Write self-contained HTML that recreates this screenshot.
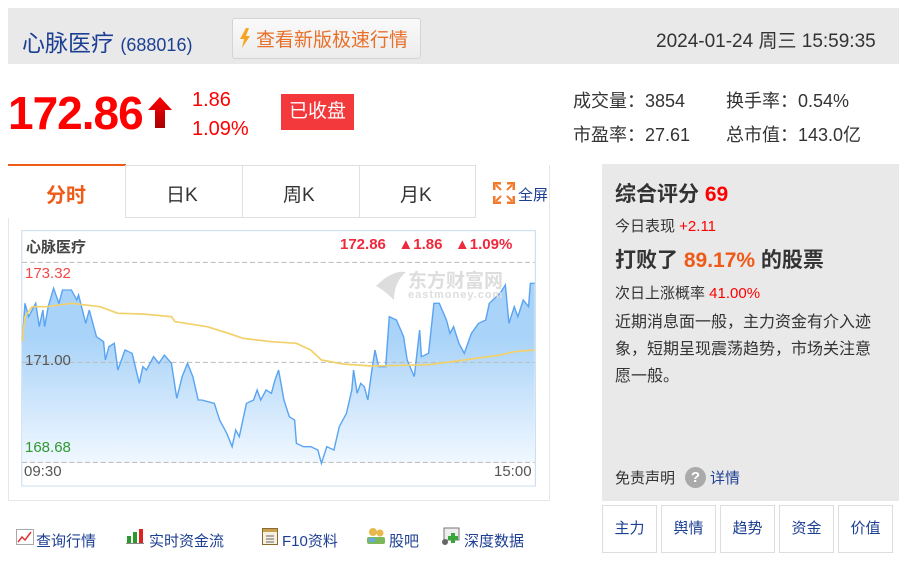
<!DOCTYPE html>
<html><head><meta charset="utf-8"><style>
*{margin:0;padding:0;box-sizing:border-box}
body{width:906px;height:567px;background:#fff;position:relative;overflow:hidden;font-family:"Liberation Sans","Noto Sans CJK SC",sans-serif;color:#333}
.a{position:absolute;white-space:nowrap}
.blue{color:#1d3f93}
.red{color:#f00}
</style></head><body>
<div class="a" style="left:8px;top:8px;width:891px;height:56px;background:#e9e9e9"></div>
<div class="a blue" style="left:22px;top:24px;font-size:23px">心脉医疗 <span style="font-size:18px">(688016)</span></div>
<div class="a" style="left:232px;top:18px;width:189px;height:41px;border:1px solid #d4d4d4;border-radius:3px;background:linear-gradient(#fafafa,#ececec)"></div>
<svg class="a" style="left:239px;top:28px" width="12" height="20" viewBox="0 0 12 20"><path d="M7 0L1 11h4l-2 9 8-12H7l3-8z" fill="#f5a623"/></svg>
<div class="a" style="left:256px;top:25px;font-size:19px;color:#e8702a">查看新版极速行情</div>
<div class="a" style="left:656px;top:26px;font-size:19px;color:#333">2024-01-24 周三 15:59:35</div>

<div class="a red" style="left:8px;top:86px;font-size:46px;font-weight:bold;letter-spacing:-1px">172.86</div>
<svg class="a" style="left:147px;top:97px" width="26" height="32" viewBox="0 0 26 32"><defs><linearGradient id="ar" x1="0" y1="0" x2="0" y2="1"><stop offset="0" stop-color="#f00"/><stop offset="1" stop-color="#a00"/></linearGradient></defs><path d="M13 0L25 13H18V31H8V13H1z" fill="url(#ar)"/></svg>
<div class="a red" style="left:192px;top:86px;font-size:20px;line-height:29px">1.86<br>1.09%</div>
<div class="a" style="left:281px;top:94px;width:73px;height:36px;background:#f3393b;color:#fff;font-size:19px;line-height:36px;text-align:center">已收盘</div>

<div class="a" style="left:573px;top:84px;font-size:18px;line-height:34px">成交量：3854<br>市盈率：27.61</div>
<div class="a" style="left:726px;top:84px;font-size:18px;line-height:34px">换手率：0.54%<br>总市值：143.0亿</div>

<!-- left panel -->
<div class="a" style="left:8px;top:165px;width:542px;height:336px;border:1px solid #e6e6e6;border-top:none"></div>
<div class="a" style="left:8px;top:164px;width:118px;height:54px;border-top:2px solid #ee5b19;background:#fff"></div>
<div class="a" style="left:125px;top:165px;width:351px;height:53px;border:1px solid #e0e0e0;background:#fff"></div>
<div class="a" style="left:242px;top:165px;width:1px;height:53px;background:#e0e0e0"></div>
<div class="a" style="left:359px;top:165px;width:1px;height:53px;background:#e0e0e0"></div>
<div class="a" style="left:46px;top:179px;font-size:20px;font-weight:bold;color:#ee5b19">分时</div>
<div class="a" style="left:166px;top:180px;font-size:19px">日K</div>
<div class="a" style="left:283px;top:180px;font-size:19px">周K</div>
<div class="a" style="left:400px;top:180px;font-size:19px">月K</div>
<svg class="a" style="left:493px;top:182px" width="22" height="22" viewBox="0 0 22 22" fill="none" stroke="#f27a2a" stroke-width="3"><path d="M1 8V1h7M14 1h7v7M21 14v7h-7M8 21H1v-7"/><path d="M3 3l5 5M19 3l-5 5M19 19l-5-5M3 19l5-5" stroke-width="2"/></svg>
<div class="a blue" style="left:518px;top:184px;font-size:15px">全屏</div>

<svg class="a" style="left:0;top:160px" width="600" height="330" viewBox="0 0 1680 990" preserveAspectRatio="none">
<defs><linearGradient id="g" x1="0" y1="0" x2="0" y2="1"><stop offset="0.3" stop-color="#a9d3f8"/><stop offset="1" stop-color="#f1f8ff"/></linearGradient></defs>
<rect x="61" y="212" width="1438" height="766" fill="none" stroke="#c8dcef" stroke-width="3"/>
<path d="M62 545L70 430L80 470L100 430L110 500L120 450L125 500L135 440L150 385L165 430L175 390L200 390L215 420L220 405L240 490L250 450L270 530L290 545L295 600L305 560L320 550L330 630L350 570L370 580L390 670L400 620L410 630L430 590L445 610L460 585L480 610L495 715L510 650L525 610L540 650L555 720L565 720L600 730L615 780L635 820L650 860L660 810L670 830L690 730L710 720L720 690L730 720L745 690L760 700L770 660L780 630L795 720L810 770L825 780L830 850L850 860L870 860L890 870L900 910L915 860L935 870L950 800L970 760L985 690L990 630L1000 700L1010 670L1020 680L1030 720L1040 640L1050 570L1060 620L1080 620L1090 470L1110 480L1130 530L1140 600L1160 650L1175 510L1180 590L1200 580L1215 430L1230 430L1250 480L1260 520L1270 500L1285 550L1300 580L1320 520L1340 490L1360 480L1370 430L1380 420L1400 400L1415 375L1425 490L1440 440L1450 470L1465 420L1480 440L1485 370L1497 370L1497 908L62 908Z" fill="url(#g)"/>
<g stroke="#bbb" stroke-width="3" stroke-dasharray="14 8"><line x1="62" y1="307" x2="1497" y2="307"/><line x1="62" y1="607" x2="1497" y2="607"/><line x1="62" y1="907" x2="1497" y2="907"/></g>
<path d="M62 545L70 430L80 470L100 430L110 500L120 450L125 500L135 440L150 385L165 430L175 390L200 390L215 420L220 405L240 490L250 450L270 530L290 545L295 600L305 560L320 550L330 630L350 570L370 580L390 670L400 620L410 630L430 590L445 610L460 585L480 610L495 715L510 650L525 610L540 650L555 720L565 720L600 730L615 780L635 820L650 860L660 810L670 830L690 730L710 720L720 690L730 720L745 690L760 700L770 660L780 630L795 720L810 770L825 780L830 850L850 860L870 860L890 870L900 910L915 860L935 870L950 800L970 760L985 690L990 630L1000 700L1010 670L1020 680L1030 720L1040 640L1050 570L1060 620L1080 620L1090 470L1110 480L1130 530L1140 600L1160 650L1175 510L1180 590L1200 580L1215 430L1230 430L1250 480L1260 520L1270 500L1285 550L1300 580L1320 520L1340 490L1360 480L1370 430L1380 420L1400 400L1415 375L1425 490L1440 440L1450 470L1465 420L1480 440L1485 370L1497 370" fill="none" stroke="#5aa4f2" stroke-width="4"/>
<path d="M62 545L70 470L90 440L130 440L200 430L280 440L330 460L400 462L480 470L490 485L580 500L640 520L680 535L760 545L830 550L870 570L900 600L960 612L1040 618L1200 614L1300 600L1400 585L1440 575L1497 570" fill="none" stroke="#f2d16b" stroke-width="5"/>
</svg>
<svg class="a" style="left:374px;top:270px" width="34" height="32" viewBox="0 0 34 32"><path d="M2 16Q18 0 32 2Q20 12 20 30Q10 20 2 16Z" fill="#ddd"/></svg>
<div class="a" style="left:408px;top:266px;font-size:19px;font-weight:bold;color:#ddd">东方财富网</div>
<div class="a" style="left:408px;top:289px;font-size:11px;font-weight:bold;color:#ddd;letter-spacing:1px">eastmoney.com</div>
<div class="a" style="left:26px;top:236px;font-size:15px;font-weight:bold;color:#444">心脉医疗</div>
<div class="a" style="left:340px;top:236px;font-size:15px;font-weight:bold;color:#f0283c">172.86 &nbsp; ▲1.86 &nbsp; ▲1.09%</div>
<div class="a" style="left:25px;top:265px;font-size:15px;color:#f04848">173.32</div>
<div class="a" style="left:25px;top:352px;font-size:15px;color:#555">171.00</div>
<div class="a" style="left:25px;top:439px;font-size:15px;color:#2e9a2e">168.68</div>
<div class="a" style="left:24px;top:463px;font-size:15px;color:#555">09:30</div>
<div class="a" style="left:494px;top:463px;font-size:15px;color:#555">15:00</div>

<!-- bottom links -->
<svg class="a" style="left:16px;top:529px" width="18" height="16" viewBox="0 0 18 16"><rect x=".5" y=".5" width="17" height="15" fill="#fff" stroke="#aaa"/><path d="M2 13l4-5 3 3 6-8" stroke="#d33" fill="none" stroke-width="1.5"/></svg>
<div class="a blue" style="left:36px;top:530px;font-size:15px">查询行情</div>
<svg class="a" style="left:126px;top:528px" width="18" height="16" viewBox="0 0 18 16"><rect x="1" y="8" width="4" height="7" fill="#2a9a2a"/><rect x="7" y="4" width="4" height="11" fill="#2a9a2a"/><rect x="13" y="1" width="4" height="14" fill="#d22"/><rect x="0" y="15" width="18" height="1" fill="#888"/></svg>
<div class="a blue" style="left:149px;top:530px;font-size:15px">实时资金流</div>
<svg class="a" style="left:262px;top:528px" width="16" height="17" viewBox="0 0 16 17"><rect x=".5" y=".5" width="15" height="16" fill="#f6f0e0" stroke="#8a6a30"/><rect x="1" y="1" width="14" height="3" fill="#c9a050"/><path d="M4 8h8M4 11h8M4 14h8" stroke="#666"/></svg>
<div class="a blue" style="left:282px;top:530px;font-size:15px">F10资料</div>
<svg class="a" style="left:366px;top:527px" width="20" height="18" viewBox="0 0 20 18"><circle cx="7" cy="5" r="4" fill="#e8b84a"/><circle cx="14" cy="6" r="3.5" fill="#e8b84a"/><rect x="1" y="10" width="18" height="7" rx="2" fill="#7ab85a"/><rect x="3" y="11" width="6" height="4" fill="#6aa8e0"/></svg>
<div class="a blue" style="left:389px;top:530px;font-size:15px">股吧</div>
<svg class="a" style="left:441px;top:527px" width="20" height="19" viewBox="0 0 20 19"><rect x="3" y="1" width="15" height="12" fill="#eee" stroke="#777"/><path d="M10 6h4v3h3v4h-3v3h-4v-3H7V9h3z" fill="#3aa53a"/><circle cx="4" cy="15" r="3" fill="#666"/></svg>
<div class="a blue" style="left:464px;top:530px;font-size:15px">深度数据</div>

<!-- right panel -->
<div class="a" style="left:602px;top:164px;width:297px;height:337px;background:#e9e9e9"></div>
<div class="a" style="left:615px;top:178px;font-size:21px;font-weight:bold;color:#333">综合评分 <span class="red">69</span></div>
<div class="a" style="left:615px;top:215px;font-size:15px;color:#333">今日表现 <span class="red">+2.11</span></div>
<div class="a" style="left:615px;top:244px;font-size:21px;font-weight:bold;color:#333">打败了 <span style="color:#ee5b19">89.17%</span> 的股票</div>
<div class="a" style="left:615px;top:282px;font-size:15px;color:#333">次日上涨概率 <span class="red">41.00%</span></div>
<div class="a" style="left:615px;top:309px;font-size:16px;color:#333;line-height:27px;white-space:normal;width:264px">近期消息面一般，主力资金有介入迹象，短期呈现震荡趋势，市场关注意愿一般。</div>
<div class="a" style="left:615px;top:467px;font-size:15px;color:#333">免责声明</div>
<div class="a" style="left:685px;top:467px;width:21px;height:21px;border-radius:50%;background:#aaa;color:#fff;font-size:15px;font-weight:bold;text-align:center;line-height:21px">?</div>
<div class="a blue" style="left:710px;top:467px;font-size:15px">详情</div>
<div class="a" style="left:602px;top:505px;display:flex;gap:4px">
<div style="width:55px;height:48px;border:1px solid #ddd;text-align:center;line-height:46px;font-size:15px;color:#1d3f93">主力</div>
<div style="width:55px;height:48px;border:1px solid #ddd;text-align:center;line-height:46px;font-size:15px;color:#1d3f93">舆情</div>
<div style="width:55px;height:48px;border:1px solid #ddd;text-align:center;line-height:46px;font-size:15px;color:#1d3f93">趋势</div>
<div style="width:55px;height:48px;border:1px solid #ddd;text-align:center;line-height:46px;font-size:15px;color:#1d3f93">资金</div>
<div style="width:55px;height:48px;border:1px solid #ddd;text-align:center;line-height:46px;font-size:15px;color:#1d3f93">价值</div>
</div>
</body></html>
